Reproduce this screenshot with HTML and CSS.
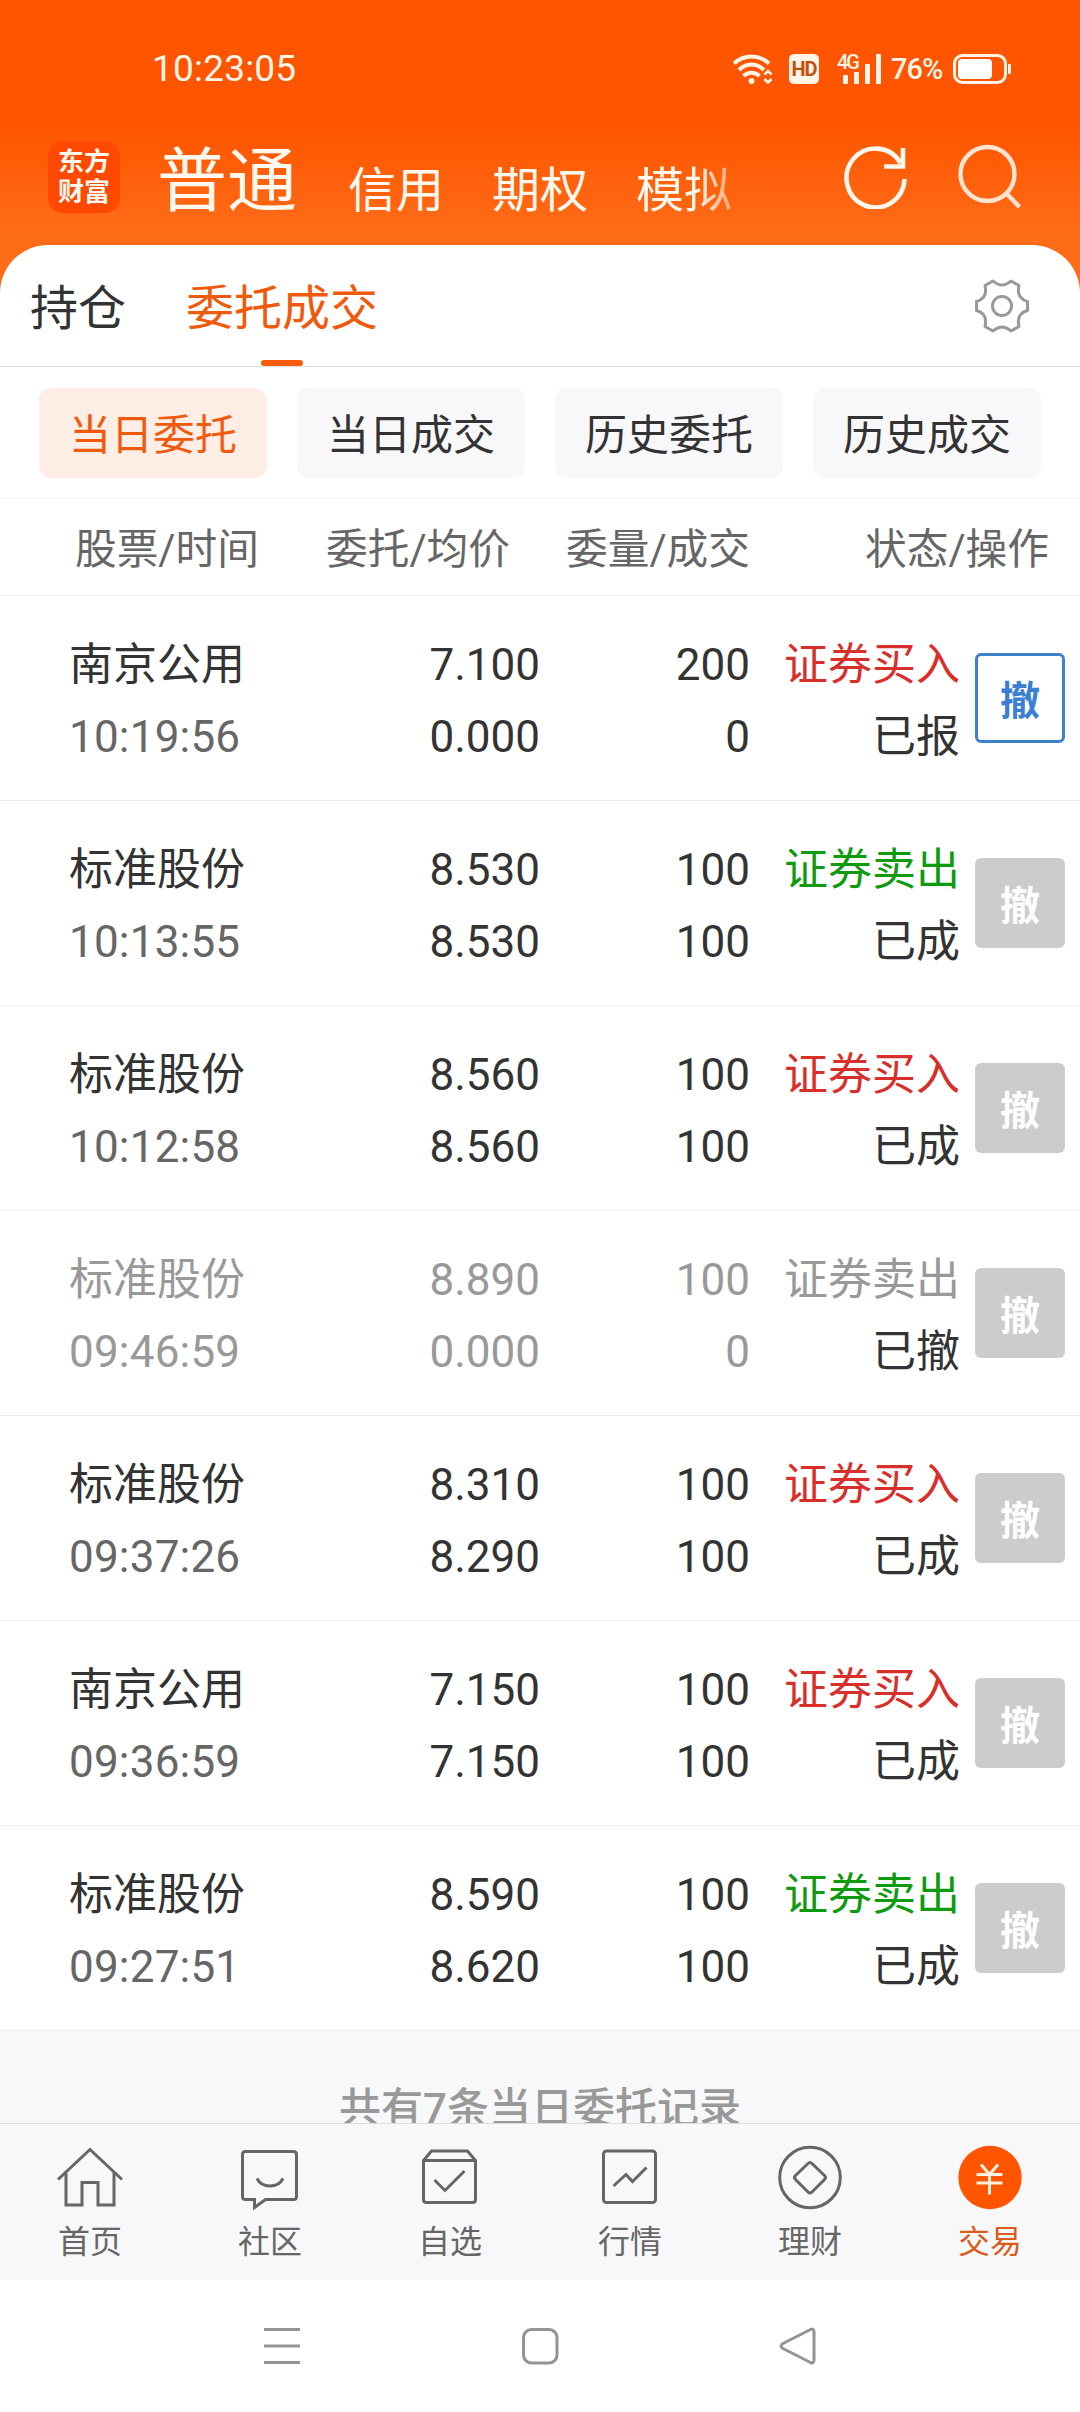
FILE: index.html
```html
<!DOCTYPE html>
<html lang="zh-CN">
<head>
    <meta charset="UTF-8">
    <title>委托成交</title>
    <meta name="viewport" content="width=device-width, initial-scale=1">
    <link rel="stylesheet" href="styles.css">
</head>
<body>
    <div class="app">
        <header class="top">
            <div class="status-bar">
                <span class="clock">10:23:05</span>
                <svg class="wifi" width="40" height="30" viewBox="0 0 40 30" fill="none" stroke="#fff4e6" stroke-width="4">
                    <path d="M1 9.500C11 0 26 0 36 9.500"/>
                    <path d="M6 16C13.500 8.800 23.500 8.800 31 16"/>
                    <path d="M10.500 22C15 17.500 22 17.500 26.500 22"/>
                    <circle cx="18.500" cy="27" r="2.900" fill="#fff4e6" stroke="none"/>
                    <path d="M31.500 20.500l3.500-3.500 3.500 3.500M31.500 25l3.500 3.500 3.500-3.500" stroke-width="2.600"/>
                </svg>
                <span class="hd">HD</span>
                <div class="signal">
                    <span class="net">4G</span>
                    <svg width="38" height="30" viewBox="0 0 38 30" fill="#fff4e6">
                        <rect x="0" y="21" width="5" height="9" rx="1"/>
                        <rect x="11" y="18" width="5" height="12" rx="1"/>
                        <rect x="22" y="10" width="5" height="20" rx="1"/>
                        <rect x="33" y="0" width="5" height="30" rx="1"/>
                    </svg>
                </div>
                <span class="percent">76%</span>
                <svg class="battery" width="58" height="30" viewBox="0 0 58 30">
                    <rect x="1.500" y="1.500" width="51" height="27" rx="8" fill="none" stroke="#fff4e6" stroke-width="3"/>
                    <rect x="5" y="5" width="34" height="20" rx="4" fill="#fff"/>
                    <rect x="55" y="10" width="3" height="10" rx="1" fill="#fff4e6"/>
                </svg>
            </div>
            <div class="nav">
                <div class="logo">东方<br>财富</div>
                <div class="accounts">
                    <span class="current">普通</span>
                    <span>信用</span>
                    <span>期权</span>
                    <span class="fade">模拟</span>
                </div>
                <svg class="refresh" width="64" height="64" viewBox="0 0 64 64" fill="none" stroke="#fff6ec" stroke-width="4.600">
                    <path d="M60.500 34A29 29.500 0 1 1 56.500 18"/>
                    <path d="M40 21.500H59V3"/>
                </svg>
                <svg class="search" width="64" height="64" viewBox="0 0 64 64" fill="none" stroke="#ffe4d2" stroke-width="4.400">
                    <circle cx="29.500" cy="30" r="27"/>
                    <path d="M48.500 49.500L61.500 63"/>
                </svg>
            </div>
        </header>

        <main class="panel">
            <div class="tabs">
                <span class="tab">持仓</span>
                <span class="tab active">委托成交</span>
                <svg class="gear" width="56" height="56" viewBox="0 0 56 56" fill="none" stroke="#999" stroke-width="3" stroke-linejoin="round">
                    <path d="M19 3Q28 11 37 3L45 7.500C43 16 46 21.500 53.500 23.500V32.500C46 34.500 43 40 45 48.500L37 53Q28 45 19 53L11 48.500C13 40 10 34.500 2.500 32.500V23.500C10 21.500 13 16 11 7.500Z"/>
                    <circle cx="28" cy="28" r="9.500"/>
                </svg>
            </div>
            <div class="filters">
                <span class="chip on">当日委托</span>
                <span class="chip">当日成交</span>
                <span class="chip">历史委托</span>
                <span class="chip">历史成交</span>
            </div>
            <div class="list-head">
                <span>股票/时间</span>
                <span>委托/均价</span>
                <span>委量/成交</span>
                <span>状态/操作</span>
            </div>

            <div class="order">
                <div class="stock">南京公用<br><span class="time">10:19:56</span></div>
                <div class="num">7.100<br>0.000</div>
                <div class="num">200<br>0</div>
                <div class="num"><span class="buy">证券买入</span><br>已报</div>
                <button class="cancel enabled">撤</button>
            </div>
            <div class="order">
                <div class="stock">标准股份<br><span class="time">10:13:55</span></div>
                <div class="num">8.530<br>8.530</div>
                <div class="num">100<br>100</div>
                <div class="num"><span class="sell">证券卖出</span><br>已成</div>
                <button class="cancel">撤</button>
            </div>
            <div class="order">
                <div class="stock">标准股份<br><span class="time">10:12:58</span></div>
                <div class="num">8.560<br>8.560</div>
                <div class="num">100<br>100</div>
                <div class="num"><span class="buy">证券买入</span><br>已成</div>
                <button class="cancel">撤</button>
            </div>
            <div class="order revoked">
                <div class="stock">标准股份<br><span class="time">09:46:59</span></div>
                <div class="num">8.890<br>0.000</div>
                <div class="num">100<br>0</div>
                <div class="num"><span class="sell">证券卖出</span><br><span class="state">已撤</span></div>
                <button class="cancel">撤</button>
            </div>
            <div class="order">
                <div class="stock">标准股份<br><span class="time">09:37:26</span></div>
                <div class="num">8.310<br>8.290</div>
                <div class="num">100<br>100</div>
                <div class="num"><span class="buy">证券买入</span><br>已成</div>
                <button class="cancel">撤</button>
            </div>
            <div class="order">
                <div class="stock">南京公用<br><span class="time">09:36:59</span></div>
                <div class="num">7.150<br>7.150</div>
                <div class="num">100<br>100</div>
                <div class="num"><span class="buy">证券买入</span><br>已成</div>
                <button class="cancel">撤</button>
            </div>
            <div class="order">
                <div class="stock">标准股份<br><span class="time">09:27:51</span></div>
                <div class="num">8.590<br>8.620</div>
                <div class="num">100<br>100</div>
                <div class="num"><span class="sell">证券卖出</span><br>已成</div>
                <button class="cancel">撤</button>
            </div>
            <div class="total">共有7条当日委托记录</div>
        </main>

        <nav class="bottom-nav">
            <div class="item">
                <svg width="72" height="72" viewBox="0 0 72 72">
                    <path d="M4 38.500L36 8.500L68 38.500"/>
                    <path d="M12 32V64H28V41.500H44V64H60V32"/>
                </svg>
                <span>首页</span>
            </div>
            <div class="item">
                <svg width="72" height="72" viewBox="0 0 72 72">
                    <path d="M11.500 10.500H59.500Q62.500 10.500 62.500 13.500V55.500Q62.500 58.500 59.500 58.500H31.500L20.500 66.500V58.500H11.500Q8.500 58.500 8.500 55.500V13.500Q8.500 10.500 11.500 10.500Z"/>
                    <path d="M23 37.500C28 47.500 44 47.500 49 37.500"/>
                </svg>
                <span>社区</span>
            </div>
            <div class="item">
                <svg width="72" height="72" viewBox="0 0 72 72">
                    <path d="M9.500 19.500L17.500 10H53.500L61.500 19.500V58.500Q61.500 61.500 58.500 61.500H12.500Q9.500 61.500 9.500 58.500ZM9.500 19.500H61.500"/>
                    <path d="M20.500 39L31 49.500L50.500 30"/>
                </svg>
                <span>自选</span>
            </div>
            <div class="item">
                <svg width="72" height="72" viewBox="0 0 72 72">
                    <rect x="9.500" y="10" width="52" height="51.500" rx="3"/>
                    <path d="M19.500 45L32 33.500L38.500 40.500L52.500 26.500"/>
                </svg>
                <span>行情</span>
            </div>
            <div class="item">
                <svg width="72" height="72" viewBox="0 0 72 72">
                    <circle cx="36" cy="36.500" r="30.300"/>
                    <path d="M34 22.500Q36 20.500 38 22.500L50.500 34.500Q52.500 36.500 50.500 38.500L38 51Q36 53 34 51L21.500 38.500Q19.500 36.500 21.500 34.500Z"/>
                </svg>
                <span>理财</span>
            </div>
            <div class="item active">
                <svg width="72" height="72" viewBox="0 0 72 72">
                    <circle class="coin" cx="36" cy="36.500" r="31.700"/>
                    <path class="yen" d="M27 23.500L35.500 33.500L44 23.500M35.500 33.500V53.500M22.500 33.500H48.500M22.500 42H48.500"/>
                </svg>
                <span>交易</span>
            </div>
        </nav>

        <div class="system-nav">
            <svg width="40" height="40" viewBox="0 0 40 40"><path d="M2 3.500H38M2 20H38M2 36.500H38"/></svg>
            <svg width="40" height="40" viewBox="0 0 40 40"><rect x="3.500" y="3.500" width="33.500" height="33.500" rx="8"/></svg>
            <svg width="40" height="40" viewBox="0 0 40 40"><path d="M32.500 3.500Q36 2 36 6V34Q36 38 32.500 36.500L5 22.500Q1 20 5 17.500Z"/></svg>
        </div>
    </div>
</body>
</html>
```

FILE: styles.css
```css
body {
    margin: 0;
    background: #fff;
    font-family: Roboto, 'Noto Sans CJK SC', sans-serif;
    color: #333;
}
.app {
    width: 1080px;
    height: 2412px;
    display: flex;
    flex-direction: column;
    overflow: hidden;
}
svg {
    display: block;
    flex-shrink: 0;
}

/* Orange header */
.top {
    height: 245px;
    padding-bottom: 60px;
    margin-bottom: -60px;
    background: linear-gradient(#ff5500 0, #ff5500 125px, #ff6c18 235px, #ff6c18 100%);
    flex-shrink: 0;
}
.status-bar {
    height: 30px;
    padding: 54px 69px 0 152px;
    display: flex;
    align-items: center;
    color: #fff4e6;
}
.clock {
    flex: 1;
    font-size: 37px;
    line-height: 32px;
    letter-spacing: 0.2px;
}
.wifi {
    margin-right: 16px;
}
.hd {
    width: 30px;
    height: 30px;
    margin-right: 18px;
    border-radius: 5px;
    background: #fff4e6;
    color: #c2500f;
    font-size: 20px;
    font-weight: 700;
    line-height: 31px;
    text-align: center;
    letter-spacing: -1px;
}
.signal {
    position: relative;
    padding-left: 6px;
    margin-right: 10px;
}
.net {
    position: absolute;
    left: 0;
    top: -1px;
    font-size: 20px;
    font-weight: 500;
    line-height: 18px;
    letter-spacing: -2px;
}
.percent {
    width: 52px;
    margin-right: 10px;
    font-size: 29px;
    font-weight: 500;
    line-height: 30px;
    letter-spacing: -1px;
}
.nav {
    height: 72px;
    padding: 57px 58px 0 48px;
    display: flex;
    align-items: center;
}
.logo {
    width: 72px;
    height: 72px;
    box-sizing: border-box;
    padding-top: 6px;
    border-radius: 15px;
    background: #ff4800;
    color: #fff8f0;
    font-size: 26px;
    font-weight: 700;
    line-height: 30px;
    text-align: center;
}
.accounts {
    flex: 1;
    margin-left: 37px;
    padding-top: 9px;
    display: flex;
    align-items: flex-end;
    color: #fff8ee;
    font-size: 48px;
    line-height: 54px;
}
.accounts span {
    margin-right: 48px;
}
.accounts .current {
    font-size: 70px;
    line-height: 72px;
    margin-right: 51px;
}
.accounts .fade {
    -webkit-mask-image: linear-gradient(90deg, #000 60%, rgba(0,0,0,0.45) 100%);
    mask-image: linear-gradient(90deg, #000 60%, rgba(0,0,0,0.45) 100%);
}
.refresh {
    margin-right: 50px;
}
.search {
    margin-top: -2px;
}

/* White panel */
.panel {
    height: 1878px;
    background: #fff;
    border-radius: 48px 48px 0 0;
    overflow: hidden;
    flex-shrink: 0;
}
.tabs {
    height: 121px;
    padding: 0 50px 0 30px;
    border-bottom: 1px solid #ddd;
    display: flex;
    align-items: center;
}
.tab {
    position: relative;
    margin-right: 60px;
    font-size: 48px;
    line-height: 121px;
    padding-top: 3px;
    height: 118px;
}
.tab.active {
    flex: 1;
    margin-right: 0;
    color: #f05a0c;
}
.tab.active::after {
    content: "";
    position: absolute;
    left: 75px;
    bottom: 0;
    width: 42px;
    height: 6px;
    border-radius: 3px;
    background: #fa5a0a;
}
.filters {
    height: 90px;
    padding: 21px 39px 20px;
    border-bottom: 1px solid #f6f6f6;
    display: grid;
    grid-template-columns: repeat(4, 1fr);
    gap: 30px;
}
.chip {
    border-radius: 12px;
    background: #f8f8fa;
    font-size: 42px;
    line-height: 96px;
    height: 90px;
    text-align: center;
}
.chip.on {
    background: #ffeee6;
    color: #f05a0c;
}
.list-head {
    height: 96px;
    padding: 0 31px 0 75px;
    border-bottom: 1px solid #eee;
    display: grid;
    grid-template-columns: 200px 235px 240px 299px;
    color: #666;
    font-size: 41.7px;
    line-height: 102px;
    text-align: right;
}
.list-head span:first-child {
    text-align: left;
}

/* Orders */
.order {
    height: 204px;
    padding: 0 15px 0 69px;
    border-bottom: 1px solid #eee;
    display: grid;
    grid-template-columns: 231px 240px 210px 210px 90px;
    align-items: center;
    font-size: 44px;
    line-height: 72px;
}
.num {
    text-align: right;
}
.stock,
.num {
    padding-top: 5px;
}
.time {
    color: #666;
    letter-spacing: 0.2px;
}
.buy {
    color: #d92f2b;
}
.sell {
    color: #0f9a0f;
}
.cancel {
    width: 90px;
    height: 90px;
    margin-left: 15px;
    padding: 0 0 1px;
    box-sizing: border-box;
    border: none;
    border-radius: 6px;
    background: #ccc;
    color: #fff;
    font-family: inherit;
    font-size: 40px;
    font-weight: 700;
}
.cancel.enabled {
    border: 3px solid #3f80cb;
    background: #fff;
    color: #3b7fd4;
}
.revoked,
.revoked .time,
.revoked .sell {
    color: #999;
}
.revoked .state {
    color: #333;
}
.total {
    height: 94px;
    background: #f7f8fa;
    color: #999;
    font-size: 42px;
    font-weight: 500;
    line-height: 156px;
    text-align: center;
}

/* App navigation */
.bottom-nav {
    height: 156px;
    border-top: 1px solid #ddd;
    background: #f8f8fa;
    display: grid;
    grid-template-columns: repeat(6, 1fr);
    flex-shrink: 0;
    position: relative;
}
.item {
    padding-top: 17px;
    display: flex;
    flex-direction: column;
    align-items: center;
    color: #666;
    font-size: 32px;
    line-height: 58px;
}
.item svg {
    fill: none;
    stroke: #666;
    stroke-width: 3;
}
.item.active {
    color: #d95c1a;
}
.item .coin {
    fill: #ff5500;
    stroke: none;
}
.item .yen {
    stroke: #fff0e0;
}

.system-nav {
    flex: 1;
    padding: 46px 262px 0;
    display: flex;
    justify-content: space-between;
    align-items: flex-start;
    background: #fff;
}
.system-nav svg {
    fill: none;
    stroke: #949494;
    stroke-width: 3;
}
```
